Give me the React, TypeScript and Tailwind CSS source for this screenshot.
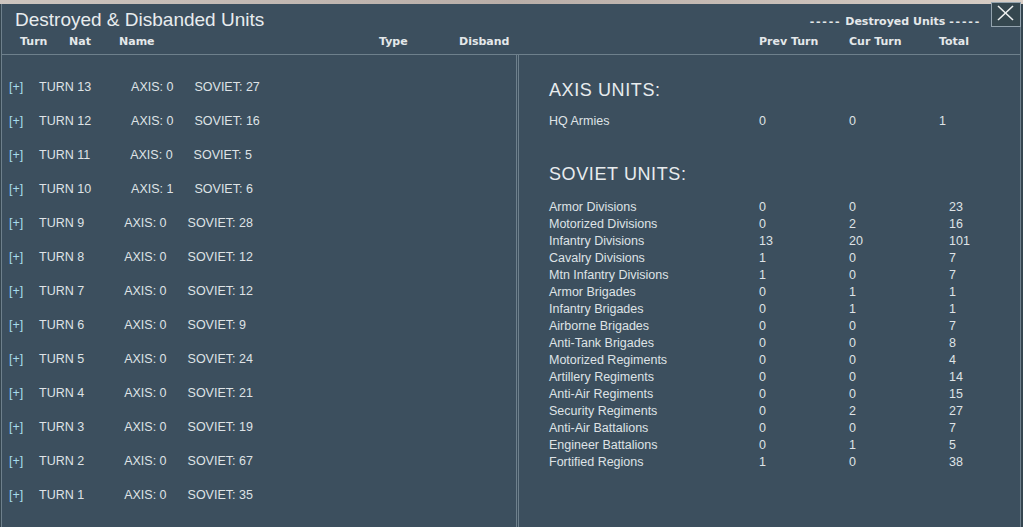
import React from 'react'

const turns = [
  { turn: 13, axis: 0, soviet: 27 },
  { turn: 12, axis: 0, soviet: 16 },
  { turn: 11, axis: 0, soviet: 5 },
  { turn: 10, axis: 1, soviet: 6 },
  { turn: 9, axis: 0, soviet: 28 },
  { turn: 8, axis: 0, soviet: 12 },
  { turn: 7, axis: 0, soviet: 12 },
  { turn: 6, axis: 0, soviet: 9 },
  { turn: 5, axis: 0, soviet: 24 },
  { turn: 4, axis: 0, soviet: 21 },
  { turn: 3, axis: 0, soviet: 19 },
  { turn: 2, axis: 0, soviet: 67 },
  { turn: 1, axis: 0, soviet: 35 },
]

const sovietUnits: [string, number, number, number][] = [
  ['Armor Divisions', 0, 0, 23],
  ['Motorized Divisions', 0, 2, 16],
  ['Infantry Divisions', 13, 20, 101],
  ['Cavalry Divisions', 1, 0, 7],
  ['Mtn Infantry Divisions', 1, 0, 7],
  ['Armor Brigades', 0, 1, 1],
  ['Infantry Brigades', 0, 1, 1],
  ['Airborne Brigades', 0, 0, 7],
  ['Anti-Tank Brigades', 0, 0, 8],
  ['Motorized Regiments', 0, 0, 4],
  ['Artillery Regiments', 0, 0, 14],
  ['Anti-Air Regiments', 0, 0, 15],
  ['Security Regiments', 0, 2, 27],
  ['Anti-Air Battalions', 0, 0, 7],
  ['Engineer Battalions', 0, 1, 5],
  ['Fortified Regions', 1, 0, 38],
]

const bold = "font-['DejaVu_Sans',sans-serif] font-bold text-[11px] leading-[13px] text-[#e4e8ea]"

function UnitRow({ name, prev, cur, total, soviet }: { name: string; prev: number; cur: number; total: number; soviet?: boolean }) {
  return (
    <div className="flex h-[17px] text-[12.5px] leading-[17px] text-[#dfe3e6]">
      <div className="w-[210px]">{name}</div>
      <div className="w-[90px]">{prev}</div>
      <div className="w-[90px]">{cur}</div>
      <div className={soviet ? 'pl-[10px]' : ''}>{total}</div>
    </div>
  )
}

export default function App() {
  return (
    <div className="relative w-[1023px] h-[527px] overflow-hidden flex flex-col bg-[#34454f] font-['Liberation_Sans',Arial,sans-serif]">
      <div className="h-[4px] shrink-0 bg-gradient-to-r from-[#cdc5bf] via-[#b9aea8] to-[#d8cec6]" />
      <div className="flex-1 flex flex-col w-[1020px] ml-[1px] border-l border-r border-[#6e808c] bg-[#3c4f5e]">
        {/* header */}
        <div className="h-[50px] shrink-0 flex flex-col">
          <div className="flex items-start justify-between mt-[5px] pl-[13px] pr-[39px]">
            <div className="text-[19px] leading-[22px] text-[#e8ecee]">Destroyed &amp; Disbanded Units</div>
            <div className={`${bold} mt-[6px]`}>
              <span className="tracking-[1.8px]">-----</span> Destroyed Units <span className="tracking-[1.8px]">-----</span>
            </div>
          </div>
          <div className={`${bold} flex mt-[4px] pl-[18px]`}>
            <div className="w-[49px]">Turn</div>
            <div className="w-[50px]">Nat</div>
            <div className="w-[260px]">Name</div>
            <div className="w-[80px]">Type</div>
            <div className="w-[300px]">Disband</div>
            <div className="w-[90px]">Prev Turn</div>
            <div className="w-[90px]">Cur Turn</div>
            <div>Total</div>
          </div>
        </div>

        {/* panels */}
        <div className="flex-1 flex border-t border-[#6e808c]">
          <div className="w-[515px] border-r border-[#6e808c] pt-[15px] pl-[7px]">
            {turns.map((t) => (
              <div key={t.turn} className="flex h-[34px] text-[12.5px] leading-[34px] text-[#dfe3e6]">
                <span className="w-[30px] text-[#a6dcec]">[+]</span>
                <span>TURN {t.turn}</span>
                <span className="ml-[40px]">AXIS: {t.axis}</span>
                <span className="ml-[21px]">SOVIET: {t.soviet}</span>
              </div>
            ))}
          </div>
          <div className="flex-1 ml-[1px] border-l border-[#6e808c] pl-[30px] pt-[24px]">
            <div className="text-[18px] leading-[22px] tracking-[0.6px] text-[#e8ecee]">AXIS UNITS:</div>
            <div className="mt-[12px]">
              <UnitRow name="HQ Armies" prev={0} cur={0} total={1} />
            </div>
            <div className="mt-[33px] text-[18px] leading-[22px] tracking-[0.6px] text-[#e8ecee]">SOVIET UNITS:</div>
            <div className="mt-[14px]">
              {sovietUnits.map(([name, p, c, t]) => (
                <UnitRow key={name} name={name} prev={p} cur={c} total={t} soviet />
              ))}
            </div>
          </div>
        </div>
      </div>

      {/* close button */}
      <button className="absolute left-[991px] top-[2px] w-[30px] h-[25px] border border-[#93a3ae] bg-[#35474f]">
        <svg width="28" height="23" viewBox="0 0 28 23" className="block">
          <line x1="6" y1="3" x2="21" y2="17" stroke="#eef0f0" strokeWidth="1.6" />
          <line x1="21" y1="3" x2="6" y2="17" stroke="#eef0f0" strokeWidth="1.6" />
        </svg>
      </button>
    </div>
  )
}
